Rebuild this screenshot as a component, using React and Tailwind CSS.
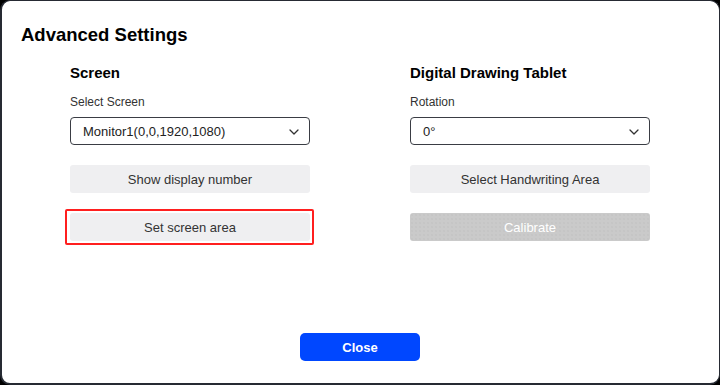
import React from 'react';

const font = "font-['Liberation_Sans',Arial,sans-serif]";

const Chevron = () => (
  <svg width="10" height="6" viewBox="0 0 10 6" fill="none" className="shrink-0">
    <path d="M1 1L5 5L9 1" stroke="#333" strokeWidth="1.3" strokeLinecap="round" strokeLinejoin="round" />
  </svg>
);

const SelectBox = ({ value }) => (
  <div className="mt-[8px] h-[28px] w-[240px] rounded-[4px] border border-[#3a3d44] flex items-center justify-between pl-[12px] pr-[10px] pt-[1px] text-[13px] text-[#222]">
    <span>{value}</span>
    <Chevron />
  </div>
);

const Button = ({ children, disabled, className = '' }) => (
  <button
    disabled={disabled}
    className={`h-[28px] w-[240px] rounded-[3px] pt-[2px] text-[13px] ${
      disabled
        ? 'bg-[#cacaca] bg-[radial-gradient(circle,#bfbfbf_0.6px,transparent_0.8px)] bg-[length:4px_4px] text-white'
        : 'bg-[#efeff1] text-[#333]'
    } ${className}`}
  >
    {children}
  </button>
);

const Column = ({ title, label, value, first, second, secondDisabled, highlightSecond }) => (
  <div className="w-[240px] flex flex-col">
    <h2 className="text-[15px] leading-[18px] font-bold text-black">{title}</h2>
    <div className="mt-[13px] text-[12px] leading-[14px] text-[#333]">{label}</div>
    <SelectBox value={value} />
    <Button className="mt-[20px]">{first}</Button>
    {highlightSecond ? (
      <div className="mt-[16px] -mx-[5px] self-start border-2 border-[#ff1f1f] rounded-[2px] pl-[3px] pr-[2px] py-[2px]">
        <Button className="block">{second}</Button>
      </div>
    ) : (
      <Button className="mt-[20px]" disabled={secondDisabled}>
        {second}
      </Button>
    )}
  </div>
);

export default function App() {
  return (
    <div className={`w-[720px] h-[385px] bg-black ${font}`}>
      <div className="h-full rounded-[10px] border border-l-2 border-b-2 border-[#262a33] bg-white flex flex-col">
        <h1 className="pt-[23px] pl-[19px] text-[18.5px] leading-[22px] font-bold text-black">Advanced Settings</h1>

        <div className="mt-[18px] pl-[68px] flex gap-[100px]">
          <Column
            title="Screen"
            label="Select Screen"
            value="Monitor1(0,0,1920,1080)"
            first="Show display number"
            second="Set screen area"
            highlightSecond
          />
          <Column
            title="Digital Drawing Tablet"
            label="Rotation"
            value="0°"
            first="Select Handwriting Area"
            second="Calibrate"
            secondDisabled
          />
        </div>

        <div className="flex-1" />

        <div className="flex justify-center pb-[22px] pr-[1px]">
          <button className="h-[28px] w-[120px] rounded-[5px] pt-[1px] bg-[#0047ff] text-white text-[13px] font-bold">
            Close
          </button>
        </div>
      </div>
    </div>
  );
}
